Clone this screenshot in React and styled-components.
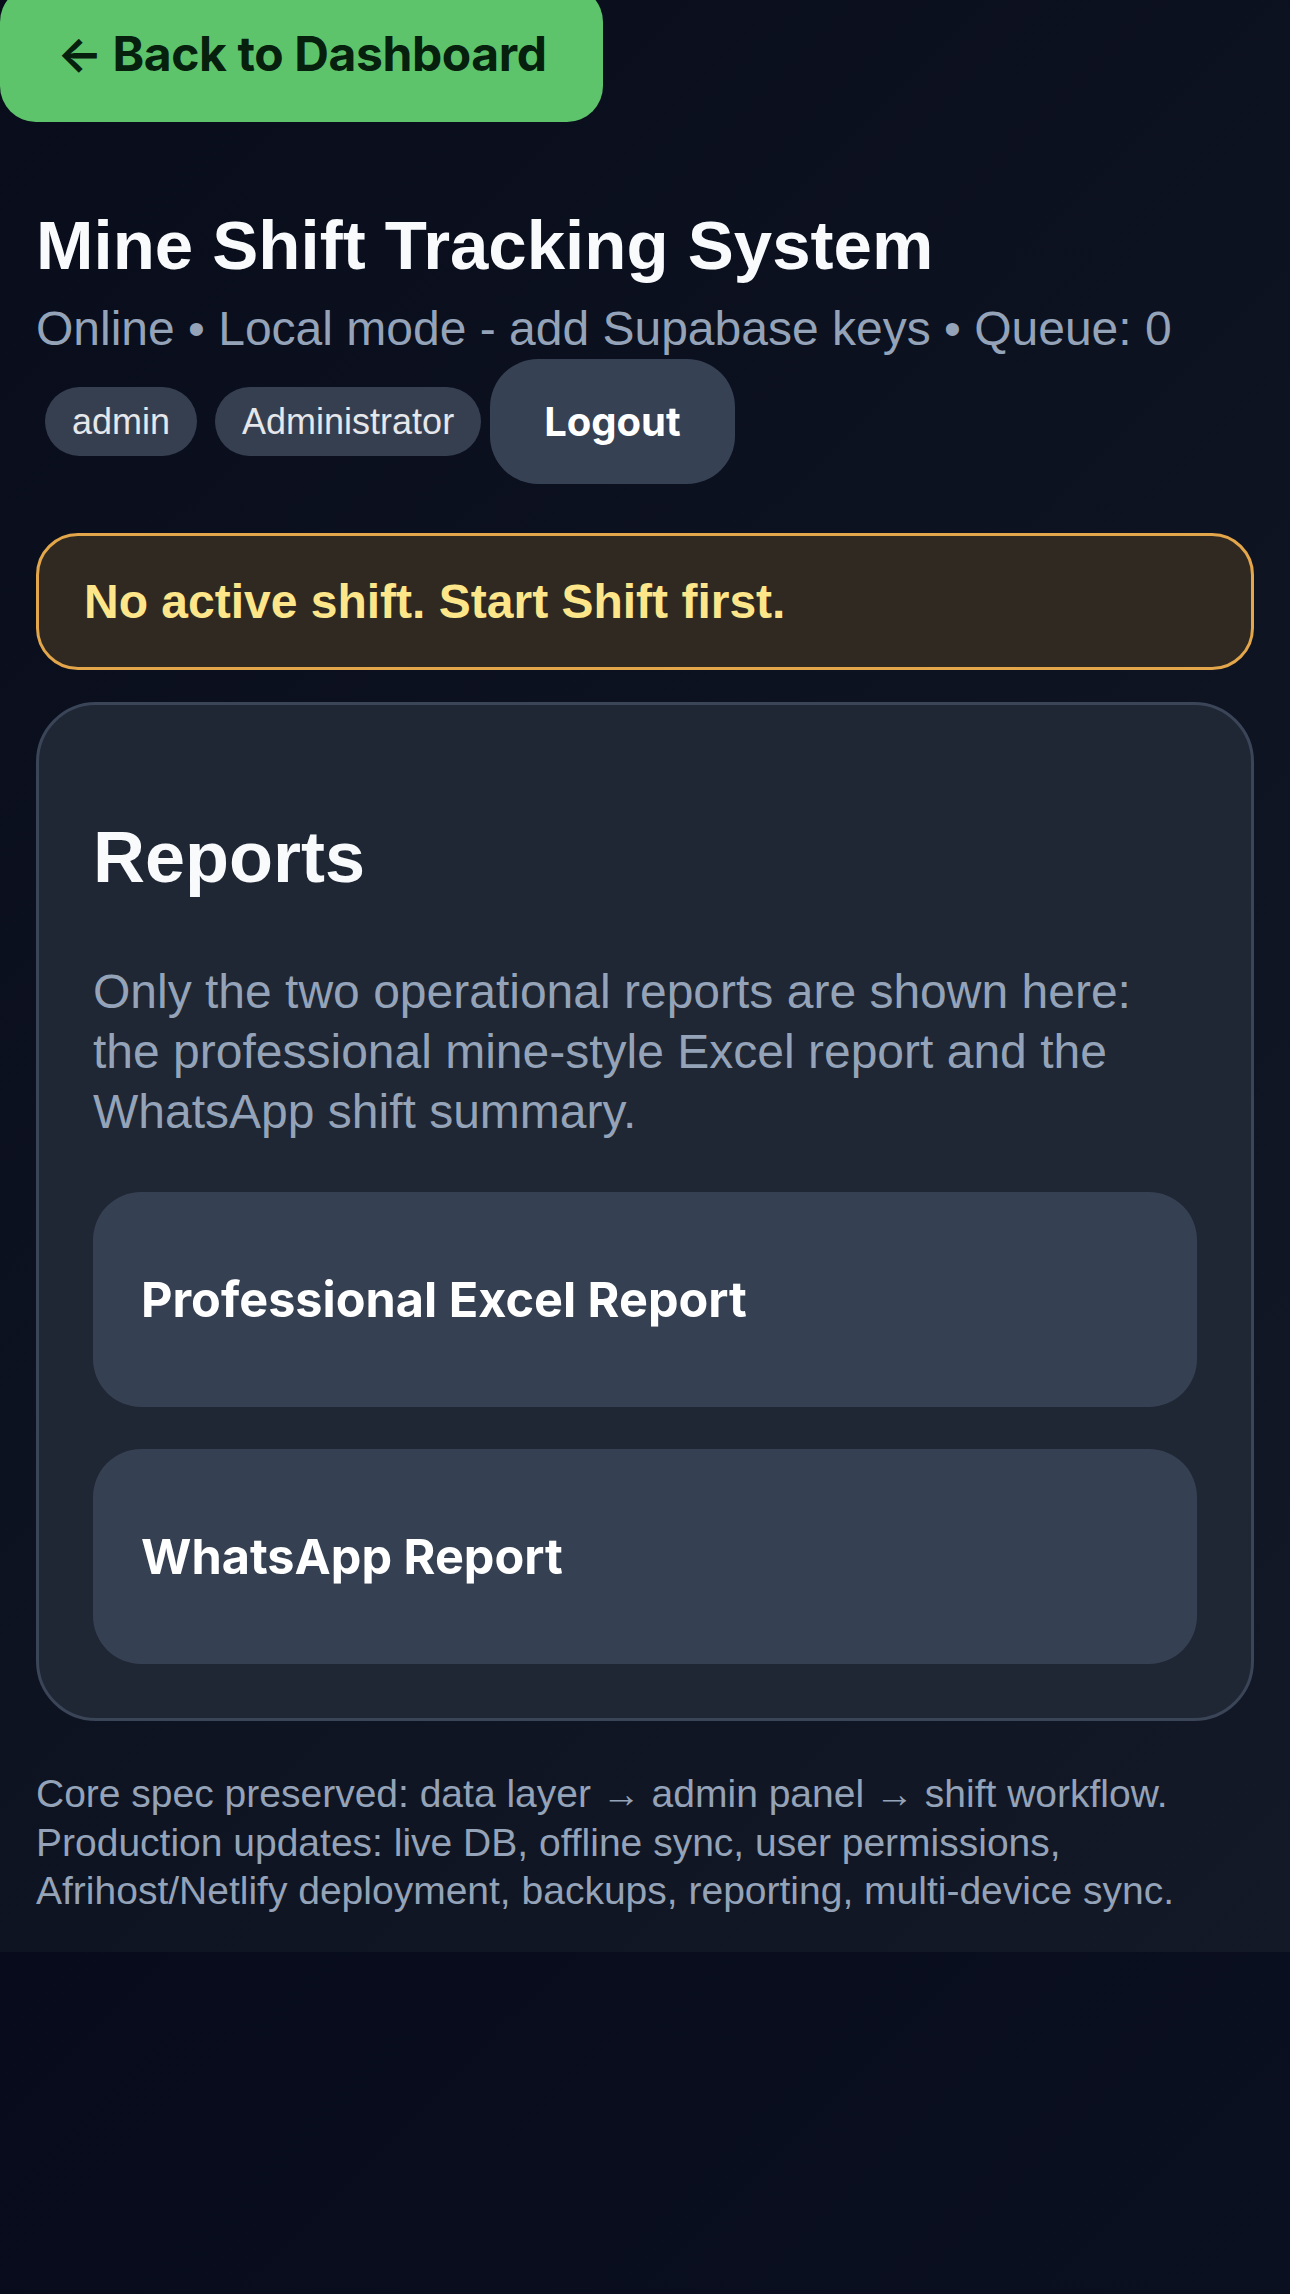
import React from "react";
import styled, { createGlobalStyle } from "styled-components";

const GlobalStyle = createGlobalStyle`
  html, body {
    margin: 0;
    padding: 0;
  }
  body {
    min-height: 100vh;
    background: linear-gradient(135deg, #050918 0%, #070b1b 55%, #0b1021 100%);
    font-family: "Liberation Sans", Arial, sans-serif;
    -webkit-font-smoothing: antialiased;
  }
`;

const Page = styled.div`
  display: flex;
  flex-direction: column;
  padding: 0 36px 36px;
  background: linear-gradient(135deg, #080c1b 0%, #0d1221 45%, #141927 100%);
`;

const BackButton = styled.button`
  align-self: flex-start;
  display: flex;
  align-items: center;
  gap: 10px;
  margin: -14px 0 0 -36px;
  padding: 39px 56px 39px 57px;
  border: none;
  border-radius: 36px;
  background: #5ec46c;
  color: #07200e;
  font-family: Inter, "Liberation Sans", sans-serif;
  font-size: 48px;
  font-weight: 700;
  letter-spacing: -0.4px;
  line-height: 58px;
  cursor: pointer;
`;

const Title = styled.h1`
  margin: 85px 0 0;
  color: #f8fafc;
  font-size: 69px;
  font-weight: 700;
  line-height: 78px;
`;

const StatusLine = styled.p`
  margin: 16px 0 0;
  color: #94a3b8;
  font-size: 48px;
  line-height: 55px;
`;

const UserRow = styled.div`
  display: flex;
  align-items: center;
  margin-top: 3px;
`;

const Pill = styled.span`
  margin: 0 9px;
  padding: 14px 27px;
  border-radius: 999px;
  background: #363f50;
  color: #e5e7eb;
  font-size: 36px;
  line-height: 41px;
`;

const LogoutButton = styled.button`
  padding: 38px 54px;
  border: none;
  border-radius: 48px;
  background: #364153;
  color: #ffffff;
  font-family: Inter, "Liberation Sans", sans-serif;
  font-size: 40px;
  font-weight: 700;
  line-height: 49px;
  cursor: pointer;
`;

const Notice = styled.div`
  margin-top: 49px;
  padding: 38px 45px;
  border: 3px solid #e3a64a;
  border-radius: 42px;
  background: #2f2921;
  color: #fde68a;
  font-size: 48px;
  font-weight: 700;
  line-height: 55px;
`;

const Card = styled.section`
  margin-top: 32px;
  padding: 54px;
  border: 3px solid #3a4558;
  border-radius: 60px;
  background: #1f2634;
  display: flex;
  flex-direction: column;
`;

const CardTitle = styled.h2`
  margin: 57px 0 63px;
  color: #f8fafc;
  font-size: 72px;
  font-weight: 700;
  line-height: 83px;
`;

const CardText = styled.p`
  margin: 0 0 50px;
  color: #94a3b8;
  font-size: 48px;
  line-height: 60px;
`;

const ReportList = styled.div`
  display: flex;
  flex-direction: column;
  gap: 42px;
`;

const ReportButton = styled.button`
  display: flex;
  align-items: center;
  height: 215px;
  padding: 0 48px;
  border: none;
  border-radius: 48px;
  background: #354052;
  color: #ffffff;
  font-family: Inter, "Liberation Sans", sans-serif;
  font-size: 48.6px;
  font-weight: 700;
  text-align: left;
  cursor: pointer;
`;

const Footer = styled.div`
  margin-top: 49px;
  color: #94a3b8;
  font-size: 39px;
  line-height: 48.5px;
`;

export default function App() {
  return (
    <>
      <GlobalStyle />
      <Page>
        <BackButton>
          <span>←</span>
          <span>Back to Dashboard</span>
        </BackButton>

        <Title>Mine Shift Tracking System</Title>
        <StatusLine>Online • Local mode - add Supabase keys • Queue: 0</StatusLine>

        <UserRow>
          <Pill>admin</Pill>
          <Pill>Administrator</Pill>
          <LogoutButton>Logout</LogoutButton>
        </UserRow>

        <Notice>No active shift. Start Shift first.</Notice>

        <Card>
          <CardTitle>Reports</CardTitle>
          <CardText>
            Only the two operational reports are shown here:
            <br />
            the professional mine-style Excel report and the
            <br />
            WhatsApp shift summary.
          </CardText>
          <ReportList>
            <ReportButton>Professional Excel Report</ReportButton>
            <ReportButton>WhatsApp Report</ReportButton>
          </ReportList>
        </Card>

        <Footer>
          <div>Core spec preserved: data layer → admin panel → shift workflow.</div>
          <div>
            Production updates: live DB, offline sync, user permissions,
            Afrihost/Netlify deployment, backups, reporting, multi-device sync.
          </div>
        </Footer>
      </Page>
    </>
  );
}
